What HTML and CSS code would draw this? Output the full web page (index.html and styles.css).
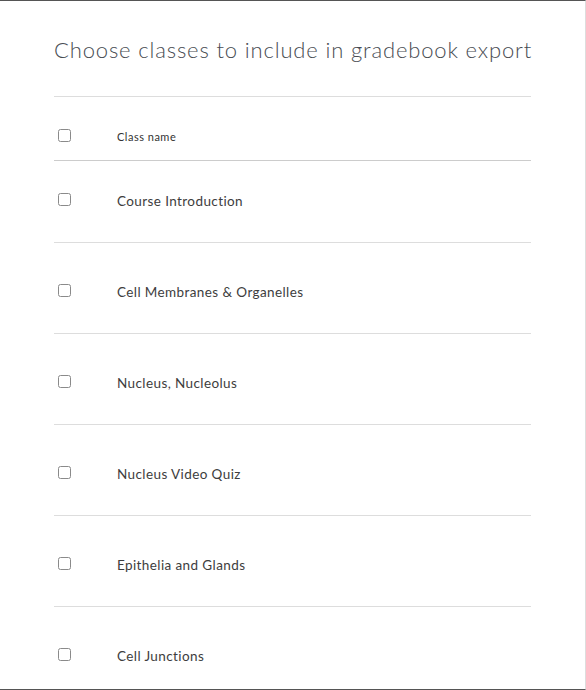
FILE: index.html
```html
<!DOCTYPE html>
<html>
<head>
<meta charset="utf-8">
<link rel="stylesheet" href="styles.css">
</head>
<body>
<div class="modal">
  <div class="content">
    <h1 class="title">Choose classes to include in gradebook export</h1>
    <div class="table">
      <div class="row head">
        <span class="cb-cell"><input type="checkbox"></span>
        <span class="head-label">Class name</span>
      </div>
      <div class="row first">
        <span class="cb-cell"><input type="checkbox"></span>
        <span class="label">Course Introduction</span>
      </div>
      <div class="row">
        <span class="cb-cell"><input type="checkbox"></span>
        <span class="label">Cell Membranes &amp; Organelles</span>
      </div>
      <div class="row">
        <span class="cb-cell"><input type="checkbox"></span>
        <span class="label">Nucleus, Nucleolus</span>
      </div>
      <div class="row">
        <span class="cb-cell"><input type="checkbox"></span>
        <span class="label">Nucleus Video Quiz</span>
      </div>
      <div class="row">
        <span class="cb-cell"><input type="checkbox"></span>
        <span class="label">Epithelia and Glands</span>
      </div>
      <div class="row">
        <span class="cb-cell"><input type="checkbox"></span>
        <span class="label">Cell Junctions</span>
      </div>
    </div>
  </div>
</div>
</body>
</html>
```
FILE: styles.css
```css
html, body {
  margin: 0;
  padding: 0;
  background: #fff;
}
body {
  font-family: "Lato", "Liberation Sans", sans-serif;
  color: #3b3b3b;
}
.modal {
  position: relative;
  box-sizing: border-box;
  width: 586px;
  height: 690px;
  border-top: 1px solid #555;
  border-bottom: 1px solid #555;
  border-right: 1px solid #ddd;
  overflow: hidden;
  background: #fff;
}
.modal::before {
  content: "";
  position: absolute;
  top: -1px;
  left: 2px;
  width: 65px;
  height: 1px;
  background: #0f2b3c;
}
.content {
  padding: 0 54px;
}
.title {
  margin: 34px 0 0;
  font-size: 22px;
  line-height: 30px;
  font-weight: 300;
  color: #484c52;
  padding-bottom: 31px;
  border-bottom: 1px solid #ddd;
  letter-spacing: 0.85px;
  white-space: nowrap;
}
.row {
  display: grid;
  grid-template-columns: 63px 1fr;
  align-items: center;
  box-sizing: border-box;
  height: 91px;
  padding-top: 36px;
  align-content: start;
  border-bottom: 1px solid #ddd;
}
.row > span {
  height: 20px;
  display: flex;
  align-items: center;
}
.row.head {
  height: 64px;
  padding-top: 28px;
  border-bottom-color: #ccc;
}
.row.first {
  height: 82px;
  padding-top: 27px;
}
.cb-cell input {
  margin: -1px 0 0 4px;
  width: 13px;
  height: 13px;
  opacity: 0.85;
}
.head-label {
  font-size: 11px;
  color: #333;
  padding-top: 1px;
  letter-spacing: 0.5px;
}
.label {
  font-size: 13.5px;
  color: #3d3d3d;
  padding-top: 3px;
  letter-spacing: 0.4px;
}
```
